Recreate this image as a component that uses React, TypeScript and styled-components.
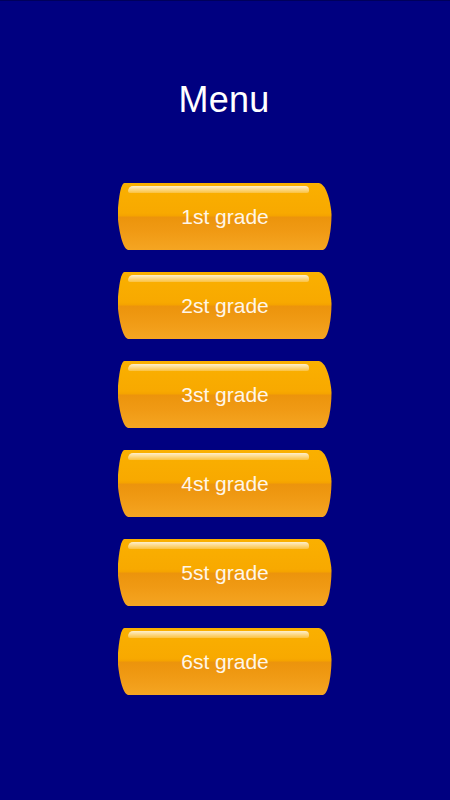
import React from 'react'
import styled, { createGlobalStyle } from 'styled-components'

const grades = ['1st', '2st', '3st', '4st', '5st', '6st']

export default function App() {
  return (
    <>
      <GlobalStyle />
      <Screen>
        <Title>Menu</Title>
        <ButtonList>
          {grades.map((g) => (
            <GradeButton key={g}>
              <Label>{g} grade</Label>
            </GradeButton>
          ))}
        </ButtonList>
      </Screen>
    </>
  )
}

const GlobalStyle = createGlobalStyle`
  html, body {
    margin: 0;
    padding: 0;
    background: #000080;
  }
  body {
    font-family: "Liberation Sans", Arial, sans-serif;
  }
`

const Screen = styled.div`
  width: 450px;
  height: 800px;
  box-sizing: border-box;
  background: #000080;
  border-top: 1px solid #00005a;
  display: flex;
  flex-direction: column;
  align-items: center;
  padding-top: 81px;
`

const Title = styled.h1`
  margin: 0 0 0 -2px;
  font-size: 36px;
  line-height: 36px;
  font-weight: 400;
  color: #ffffff;
  letter-spacing: 0.2px;
`

const ButtonList = styled.div`
  margin-top: 65px;
  display: flex;
  flex-direction: column;
  gap: 22px;
  align-items: center;
`

const GradeButton = styled.button`
  position: relative;
  width: 215px;
  height: 67px;
  border: none;
  padding: 0;
  cursor: pointer;
  display: flex;
  align-items: center;
  justify-content: center;
  background: linear-gradient(
    to bottom,
    #fab000 0%,
    #f8a900 45%,
    #f5a300 49%,
    #ec940c 51%,
    #f09a14 72%,
    #f5a522 100%
  );
  clip-path: path('M7,0 L201,0 C208,0 213,17 214,31 C214,46 211,67 205,67 L11,67 C5,67 1,46 0,31 C1,17 3,0 7,0 Z');

  &::before {
    content: '';
    position: absolute;
    left: 10px;
    right: 24px;
    top: 3px;
    height: 7px;
    border-radius: 8px 6px 3px 3px;
    background: linear-gradient(
      to bottom,
      rgba(255, 255, 255, 0.8),
      rgba(255, 255, 255, 0.25)
    );
  }
`

const Label = styled.span`
  position: relative;
  font-family: "Liberation Sans", Arial, sans-serif;
  font-size: 21px;
  color: #fff6e8;
`
